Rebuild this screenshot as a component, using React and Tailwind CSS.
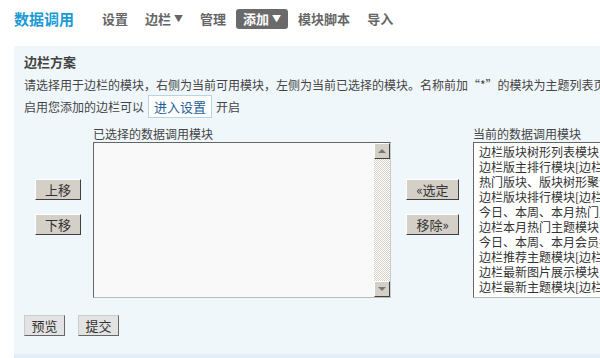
const navItems = [
  { label: "设置" },
  { label: "边栏", arrow: true },
  { label: "管理" },
  { label: "添加", arrow: true, active: true },
  { label: "模块脚本" },
  { label: "导入" },
];

const available = [
  "边栏版块树形列表模块",
  "边栏版主排行模块[边栏版主排行]",
  "热门版块、版块树形聚合模块",
  "边栏版块排行模块[边栏版块排行]",
  "今日、本周、本月热门主题模块",
  "边栏本月热门主题模块",
  "今日、本周、本月会员排行模块",
  "边栏推荐主题模块[边栏推荐主题]",
  "边栏最新图片展示模块",
  "边栏最新主题模块[边栏最新主题]",
];

function OldButton({ children, className = "" }) {
  return (
    <button
      className={`h-[21px] bg-[#d4d0c8] border border-t-white border-l-white border-r-[#404040] border-b-[#404040] text-[13px] text-[#333] leading-none ${className}`}
    >
      {children}
    </button>
  );
}

function ScrollBar() {
  return (
    <div className="w-[16px] flex flex-col h-full">
      <div className="h-[16px] bg-[#d4d0c8] border border-t-white border-l-white border-r-[#404040] border-b-[#404040] flex items-center justify-center">
        <div className="w-0 h-0 border-l-[4px] border-r-[4px] border-b-[4px] border-l-transparent border-r-transparent border-b-[#777]" />
      </div>
      <div className="flex-1 bg-[repeating-conic-gradient(#d4d0c8_0%_25%,#ffffff_0%_50%)] bg-[length:2px_2px]" />
      <div className="h-[16px] bg-[#d4d0c8] border border-t-white border-l-white border-r-[#404040] border-b-[#404040] flex items-center justify-center">
        <div className="w-0 h-0 border-l-[4px] border-r-[4px] border-t-[4px] border-l-transparent border-r-transparent border-t-[#777]" />
      </div>
    </div>
  );
}

export default function App() {
  return (
    <div
      className="w-[600px] h-[358px] bg-white overflow-hidden text-[#444]"
      style={{ fontFamily: '"Noto Sans CJK SC", "Liberation Sans", sans-serif' }}
    >
      <header className="h-[37px] flex items-center pl-[14px] pt-[1px]">
        <h1 className="text-[15px] font-bold text-[#1b9ad6]">数据调用</h1>
        <nav className="flex items-center gap-[3px] ml-[21px]">
          {navItems.map((item) => (
            <span
              key={item.label}
              className={`h-[20px] px-[7px] flex items-center text-[13px] font-bold rounded-[3px] ${
                item.active ? "bg-[#6a6a6a] text-white" : "text-[#666]"
              }`}
            >
              {item.label}
              {item.arrow && <span className="ml-[3px] text-[9px]">▼</span>}
            </span>
          ))}
        </nav>
      </header>

      <main className="ml-[14px] mt-[9px] h-[302px] bg-[#f0f7fb] pl-[10px] pt-[6px] border-b-[8px] border-[#e3eff8] box-content overflow-hidden">
        <h2 className="text-[13px] font-bold text-[#444] leading-[20px]">边栏方案</h2>
        <p className="mt-[4px] text-[12px] leading-[18px] whitespace-nowrap overflow-hidden">
          请选择用于边栏的模块，右侧为当前可用模块，左侧为当前已选择的模块。名称前加“*”的模块为主题列表页可用的模块。
        </p>
        <div className="flex items-center text-[12px] leading-[18px] mt-[1px]">
          启用您添加的边栏可以
          <span className="mx-[4px] h-[23px] px-[5px] flex items-center bg-white border border-[#b8d3e3] text-[#1e5f99] text-[13px]">
            进入设置
          </span>
          开启
        </div>

        <div className="flex mt-[9px]">
          <div className="w-[46px] shrink-0 ml-[11px] mt-[52px] flex flex-col gap-[14px]">
            <OldButton className="w-[46px]">上移</OldButton>
            <OldButton className="w-[46px]">下移</OldButton>
          </div>

          <div className="ml-[12px] w-[298px] shrink-0">
            <div className="text-[12px] leading-[14px] mb-[1px]">已选择的数据调用模块</div>
            <div className="h-[156px] flex bg-[#f9f9f9] border border-t-[#666] border-l-[#666] border-r-[#ccc] border-b-[#bbb]">
              <div className="flex-1" />
              <ScrollBar />
            </div>
          </div>

          <div className="ml-[15px] w-[53px] shrink-0 mt-[52px] flex flex-col gap-[14px]">
            <OldButton className="w-[53px]">«选定</OldButton>
            <OldButton className="w-[53px]">移除»</OldButton>
          </div>

          <div className="ml-[14px] w-[160px] shrink-0">
            <div className="text-[12px] leading-[14px] mb-[1px] whitespace-nowrap">当前的数据调用模块</div>
            <div className="h-[156px] bg-white border border-t-[#666] border-l-[#666] border-b-[#bbb] pl-[5px] pt-[1px] overflow-hidden">
              {available.map((name) => (
                <div key={name} className="text-[12px] leading-[15px] whitespace-nowrap text-[#333]">
                  {name}
                </div>
              ))}
            </div>
          </div>
        </div>

        <div className="flex gap-[13px] mt-[17px]">
          <button className="w-[41px] h-[21px] bg-[#e3e3e3] border border-[#ccc] border-r-[#666] border-b-[#666] text-[13px] text-[#333] leading-none">
            预览
          </button>
          <button className="w-[41px] h-[21px] bg-[#e3e3e3] border border-[#ccc] border-r-[#666] border-b-[#666] text-[13px] text-[#333] leading-none">
            提交
          </button>
        </div>
      </main>
    </div>
  );
}
